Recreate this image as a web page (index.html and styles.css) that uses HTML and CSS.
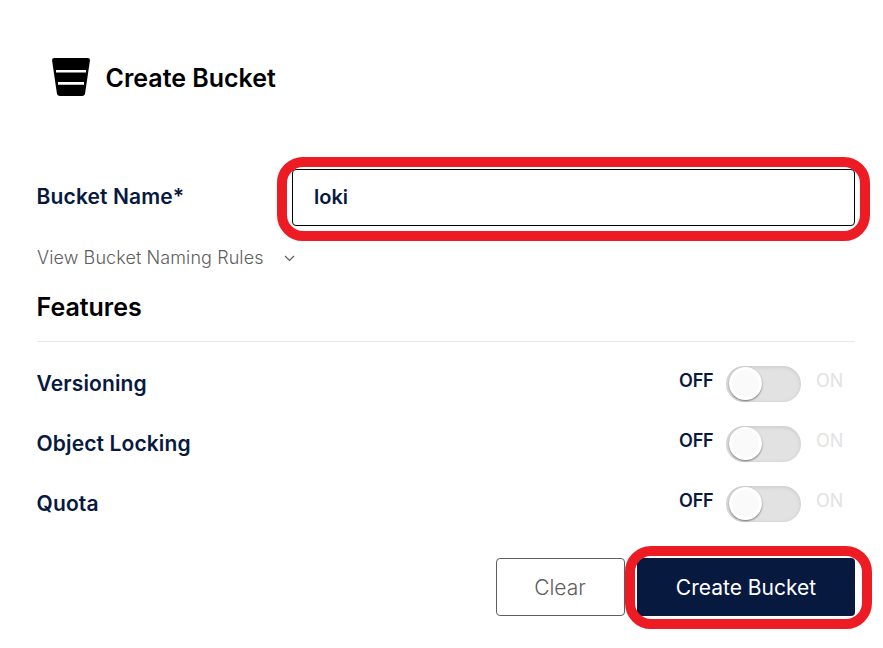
FILE: index.html
```html
<!DOCTYPE html>
<html lang="en">
<head>
<meta charset="utf-8">
<title>Create Bucket</title>
<link rel="stylesheet" href="styles.css">
</head>
<body>
<main class="page">
  <header class="header">
    <svg class="bucket-icon" width="38" height="38" viewBox="0 0 38 38" aria-hidden="true">
      <path d="M2.4 0H35.6Q38.3 0 37.9 2.8L33.1 35.3Q32.7 38 30 38H8Q5.3 38 4.9 35.3L.1 2.8Q-.3 0 2.4 0Z"/>
      <path fill="#fff" d="M4 12H34V14.6H4ZM6 24H32V26.8H6Z"/>
    </svg>
    <h1 class="title">Create Bucket</h1>
  </header>
  <form class="form">
    <div class="name-row">
      <label class="label" for="bucket">Bucket Name*</label>
      <div class="field">
        <input class="input" id="bucket" type="text" value="loki">
        <span class="highlight highlight-field"></span>
      </div>
    </div>
    <div class="rules">
      <span>View Bucket Naming Rules</span>
      <svg width="11" height="7" viewBox="0 0 11 7" fill="none" stroke="#5e5e5e" stroke-width="1.2" aria-hidden="true"><path d="M1 1L5.5 5.5L10 1"/></svg>
    </div>
    <h2 class="features">Features</h2>
    <div class="option"><span class="label">Versioning</span><span class="off">OFF</span><span class="switch"><span class="knob"></span></span><span class="on">ON</span></div>
    <div class="option"><span class="label">Object Locking</span><span class="off">OFF</span><span class="switch"><span class="knob"></span></span><span class="on">ON</span></div>
    <div class="option"><span class="label">Quota</span><span class="off">OFF</span><span class="switch"><span class="knob"></span></span><span class="on">ON</span></div>
    <div class="actions">
      <button class="button clear" type="button">Clear</button>
      <div class="submit">
        <button class="button create" type="button">Create Bucket</button>
        <span class="highlight highlight-submit"></span>
      </div>
    </div>
  </form>
</main>
</body>
</html>
```
FILE: styles.css
```css
* { box-sizing: border-box; }
body {
  margin: 0;
  background: #fff;
  color: #000;
  font-family: Inter, "Liberation Sans", sans-serif;
}
.page { height: 648px; padding: 58px 28px 0 37px; overflow: hidden; }
.header { display: flex; align-items: center; gap: 16px; height: 38px; padding-left: 15px; }
.bucket-icon { display: block; }
.title { margin: 2px 0 0 -.4px; font-size: 25px; line-height: 30px; font-weight: 600; letter-spacing: -.03px; white-space: nowrap; }
.form { margin-top: 73px; }
.name-row { display: flex; height: 57px; align-items: center; }
.name-row .label { width: 255px; }
.label { color: #07193e; font-size: 21px; line-height: 26px; font-weight: 600; letter-spacing: .12px; text-indent: -.4px; white-space: nowrap; }
.name-row .label { margin-top: -2px; }
.field { position: relative; flex: 1; height: 57px; }
.input {
  display: block;
  width: 100%;
  height: 57px;
  padding: 0 21px 2px;
  border: 1px solid #000;
  border-radius: 4px;
  outline: 0;
  background: #fff;
  color: #07193e;
  font: 600 20px Inter, "Liberation Sans", sans-serif;
}
.highlight { position: absolute; border: 10px solid #ed1c24; border-radius: 26px; pointer-events: none; }
.highlight-field { inset: -12px -15px -15px -15px; }
.highlight-submit { inset: -12px -17px -13px -12px; }
.rules { display: flex; align-items: center; gap: 20px; height: 24px; margin-top: 20px; color: #5e5e5e; font-size: 18px; font-weight: 300; letter-spacing: .09px; }
.rules span { margin-top: -2px; }
.features { height: 51px; margin: 21px 0 12px; border-bottom: 1px solid #eaeaea; font-size: 25px; line-height: 32px; font-weight: 600; letter-spacing: -.03px; text-indent: -.4px; }
.option { display: flex; align-items: center; height: 60px; }
.option .label { flex: 1; }
.off, .on { margin-top: -6px; font-size: 18px; line-height: 22px; }
.off { width: 47px; color: #07193e; font-weight: 600; letter-spacing: -.2px; }
.on { width: 38px; margin-right: 1px; color: #e2e2e2; }
.switch { width: 75px; height: 36px; margin-right: 15px; padding: 1px 3px; border-radius: 18px; background: #e2e2e2; box-shadow: inset 0 1px 4px rgba(0, 0, 0, .12); }
.knob { display: block; width: 33px; height: 33px; border: 3px solid #fff; border-radius: 50%; background: #fafafa; box-shadow: 0 1px 2px rgba(0, 0, 0, .5); }
.actions { display: flex; justify-content: flex-end; gap: 12px; margin-top: 24px; }
.submit { position: relative; }
.button { display: block; height: 58px; padding: 0; border-radius: 4px; font: 400 21px Inter, "Liberation Sans", sans-serif; }
.clear { width: 129px; padding-right: 1px; border: 1px solid #5e5e5e; background: #fff; color: #5e5e5e; font-weight: 300; }
.create { width: 218px; border: 0; background: #07193e; color: #fff; }
```
